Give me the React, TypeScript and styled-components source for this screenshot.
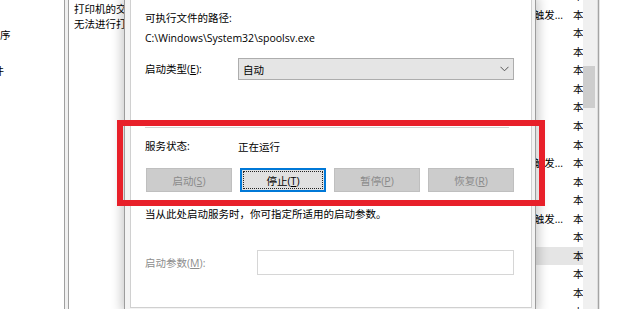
import React from 'react';
import styled, { createGlobalStyle } from 'styled-components';

const GlobalStyle = createGlobalStyle`
  html, body {
    margin: 0;
    padding: 0;
    background: #fff;
    overflow: hidden;
  }
  body {
    font-family: "Open Sans", "Noto Sans CJK SC", sans-serif;
    font-size: 10.5px;
    color: #000;
  }
`;

const Screen = styled.div`
  position: relative;
  width: 620px;
  height: 309px;
  overflow: hidden;
  background: #fff;
`;

/* ---------- services console behind the dialog ---------- */

const ConsoleWindow = styled.div`
  display: flex;
  width: 600px;
  height: 100%;
  background: #fff;
`;

const TreePane = styled.div`
  flex: none;
  width: 64px;
  padding-top: 8px;
  overflow: hidden;
`;

const TreeRow = styled.div<{ $shift: number }>`
  height: 18px;
  line-height: 18px;
  white-space: nowrap;
  margin-left: ${(p) => p.$shift}px;
`;

const Splitter = styled.div`
  flex: none;
  width: 3px;
  background: #f0f0f0;
  border-left: 1px solid #a0a0a0;
  border-right: 1px solid #a0a0a0;
`;

const DescPane = styled.div`
  flex: none;
  width: 150px;
  padding: 1.5px 0 0 5px;
  box-sizing: border-box;
  overflow: hidden;
`;

const DescLine = styled.div`
  line-height: 15px;
  white-space: nowrap;
  overflow: hidden;
`;

const ServiceList = styled.div`
  flex: 1;
  min-width: 0;
  overflow: hidden;
`;

const ListBody = styled.div`
  margin-top: -12.8px;
`;

const ListRow = styled.div<{ $selected?: boolean }>`
  display: flex;
  height: 18.55px;
  line-height: 18.55px;
  white-space: nowrap;
  background: ${(p) => (p.$selected ? '#e5e5e5' : 'transparent')};
`;

const NameCell = styled.div`
  flex: 1;
  min-width: 0;
`;

const StartTypeCell = styled.div<{ $truncated?: boolean }>`
  flex: none;
  width: 86px;
  padding-right: 3px;
  box-sizing: border-box;
  display: flex;
  justify-content: ${(p) => (p.$truncated ? 'flex-end' : 'flex-start')};
  overflow: hidden;
`;

const LogonCell = styled.div`
  flex: none;
  width: 17px;
  padding-left: 7px;
  box-sizing: border-box;
  overflow: hidden;
`;

const ScrollTrack = styled.div`
  flex: none;
  width: 14px;
  padding-top: 66px;
  box-sizing: border-box;
  background: #f0f0f0;
`;

const ScrollThumb = styled.div`
  width: 12px;
  height: 42px;
  background: #cdcdcd;
`;

const WindowEdge = styled.div`
  flex: none;
  width: 1px;
  background: #a4a4a4;
  border-left: 1px solid #dcdcdc;
  border-right: 1px solid #e6e6e6;
`;

/* ---------- properties dialog ---------- */

const Dialog = styled.div`
  position: absolute;
  left: 124px;
  top: 0;
  width: 412px;
  height: 309px;
  box-sizing: border-box;
  padding: 0 3px 0 5px;
  background: #f3f3f3;
  border-left: 1px solid #9c9c9c;
  border-right: 1px solid #9c9c9c;
  box-shadow: 0 0 10px 3px rgba(0, 0, 0, 0.2);
`;

const TabPage = styled.div`
  height: 308px;
  box-sizing: border-box;
  padding: 8px 0 0 14px;
  background: #fff;
  border: 1px solid #d0d0d0;
  border-top: none;
  display: flex;
  flex-direction: column;
`;

const TextLine = styled.div`
  line-height: 20px;
  white-space: nowrap;
`;

const FieldRow = styled.div<{ $top: number }>`
  display: flex;
  align-items: center;
  margin-top: ${(p) => p.$top}px;
`;

const FieldLabel = styled.div<{ $width: number; $disabled?: boolean }>`
  flex: none;
  width: ${(p) => p.$width}px;
  line-height: 20px;
  color: ${(p) => (p.$disabled ? '#8d8d8d' : '#000')};
`;

const Select = styled.div`
  width: 276px;
  height: 22px;
  box-sizing: border-box;
  padding: 0 4px;
  display: flex;
  align-items: center;
  justify-content: space-between;
  background: #e5e5e5;
  border: 1px solid #adadad;
`;

const Separator = styled.div`
  width: 364px;
  height: 1px;
  margin-top: 47px;
  background: #d2d2d2;
`;

const ButtonBar = styled.div`
  display: grid;
  grid-template-columns: repeat(4, 86px);
  column-gap: 8px;
  margin: 12px 0 0 1px;
`;

const ActionButton = styled.button<{ $focused?: boolean }>`
  position: relative;
  height: 24px;
  padding: 0;
  font: inherit;
  background: ${(p) => (p.$focused ? '#e1e1e1' : '#cccccc')};
  border: 1px solid ${(p) => (p.$focused ? '#0078d7' : '#bfbfbf')};
  color: ${(p) => (p.$focused ? '#000' : '#8a8a8a')};
  box-shadow: ${(p) => (p.$focused ? 'inset 0 0 0 1px #0078d7' : 'none')};
  &::after {
    content: '';
    display: ${(p) => (p.$focused ? 'block' : 'none')};
    position: absolute;
    inset: 2px;
    border: 1px dotted #222;
  }
`;

const Hint = styled(TextLine)`
  margin-top: 12px;
`;

const ParamInput = styled.div`
  width: 257px;
  height: 25px;
  box-sizing: border-box;
  background: #fff;
  border: 1px solid #d6d6d6;
`;

/* ---------- red annotation box ---------- */

const Highlight = styled.div`
  position: absolute;
  left: 117px;
  top: 120px;
  width: 428px;
  height: 86px;
  box-sizing: border-box;
  border: 6px solid #e8202a;
  pointer-events: none;
`;

const Chevron = () => (
  <svg width="9" height="6" viewBox="0 0 9 6">
    <polyline points="0.5,0.8 4.5,4.8 8.5,0.8" fill="none" stroke="#555" strokeWidth="1" />
  </svg>
);

type Row = { start: string; truncated?: boolean; selected?: boolean };

const rows: Row[] = [
  { start: '' },
  { start: '手动(触发...', truncated: true },
  { start: '' },
  { start: '' },
  { start: '' },
  { start: '' },
  { start: '' },
  { start: '' },
  { start: '' },
  { start: '自动(触发...', truncated: true },
  { start: '' },
  { start: '' },
  { start: '手动(触发...', truncated: true },
  { start: '' },
  { start: '', selected: true },
  { start: '' },
  { start: '' },
  { start: '' },
];

const App: React.FC = () => {
  return (
    <Screen>
      <GlobalStyle />
      <ConsoleWindow>
        <TreePane>
          <TreeRow $shift={0} />
          <TreeRow $shift={-10.5}>程序</TreeRow>
          <TreeRow $shift={0} />
          <TreeRow $shift={-17}>文件</TreeRow>
        </TreePane>
        <Splitter />
        <DescPane>
          <DescLine>打印机的交互。</DescLine>
          <DescLine>无法进行打印。</DescLine>
        </DescPane>
        <ServiceList>
          <ListBody>
            {rows.map((r, i) => (
              <ListRow key={i} $selected={r.selected}>
                <NameCell />
                <StartTypeCell $truncated={r.truncated}>{r.start}</StartTypeCell>
                <LogonCell>本地系统</LogonCell>
              </ListRow>
            ))}
          </ListBody>
        </ServiceList>
        <ScrollTrack>
          <ScrollThumb />
        </ScrollTrack>
        <WindowEdge />
      </ConsoleWindow>

      <Dialog>
        <TabPage>
          <TextLine>可执行文件的路径:</TextLine>
          <TextLine>C:\Windows\System32\spoolsv.exe</TextLine>
          <FieldRow $top={10}>
            <FieldLabel $width={93}>
              启动类型(<u>E</u>):
            </FieldLabel>
            <Select>
              <span>自动</span>
              <Chevron />
            </Select>
          </FieldRow>
          <Separator />
          <FieldRow $top={8}>
            <FieldLabel $width={93}>服务状态:</FieldLabel>
            <span>正在运行</span>
          </FieldRow>
          <ButtonBar>
            <ActionButton disabled>
              启动(<u>S</u>)
            </ActionButton>
            <ActionButton $focused>
              停止(<u>T</u>)
            </ActionButton>
            <ActionButton disabled>
              暂停(<u>P</u>)
            </ActionButton>
            <ActionButton disabled>
              恢复(<u>R</u>)
            </ActionButton>
          </ButtonBar>
          <Hint>当从此处启动服务时，你可指定所适用的启动参数。</Hint>
          <FieldRow $top={26}>
            <FieldLabel $width={112} $disabled>
              启动参数(<u>M</u>):
            </FieldLabel>
            <ParamInput />
          </FieldRow>
        </TabPage>
      </Dialog>

      <Highlight />
    </Screen>
  );
};

export default App;
